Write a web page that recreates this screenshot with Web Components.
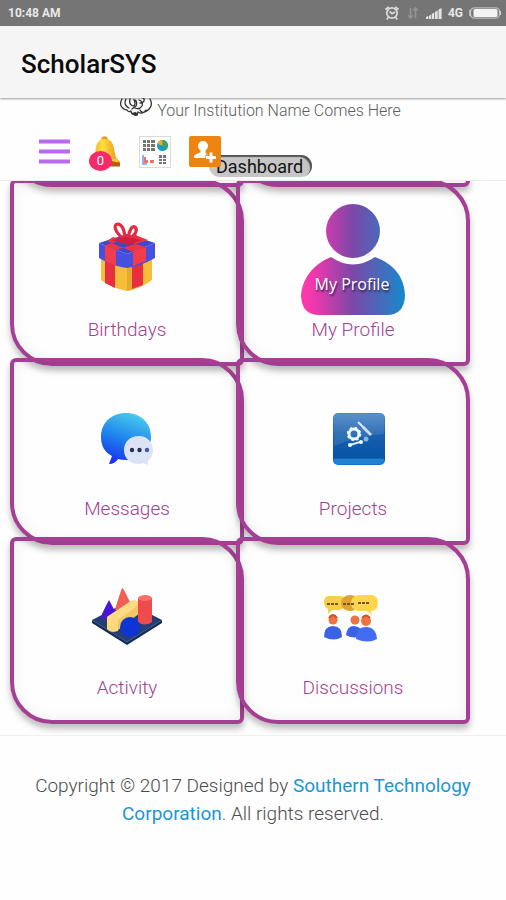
<!DOCTYPE html>
<html lang="en">
<head>
<meta charset="utf-8">
<meta name="viewport" content="width=device-width, initial-scale=1">
<title>ScholarSYS</title>
<style>
html { background: #fefefe; }
body { margin: 0; font-family: Roboto, "Liberation Sans", sans-serif; color: #757575; --brand: #a43f93; --link: #1b96d4; }
</style>
</head>
<body>
<scholar-app></scholar-app>
<script>
function define(name, html) {
  customElements.define(name, class extends HTMLElement {
    constructor() {
      super();
      const t = document.createElement('template');
      t.innerHTML = html;
      this.attachShadow({ mode: 'open' }).append(t.content.cloneNode(true));
    }
  });
}

define('status-bar', `
<style>
:host { display: flex; align-items: center; justify-content: space-between; height: 26px; padding: 0 5px 0 8px; background: #757575; color: #e8e8e8; font-size: 12px; line-height: 16px; font-weight: 700; }
.right { display: flex; align-items: center; gap: 6px; }
svg { display: block; }
</style>
<span>10:48 AM</span>
<div class="right">
  <svg width="16" height="16" viewBox="0 0 16 16" fill="none" stroke="#dedede" stroke-width="1.7"><circle cx="8" cy="8" r="5.2"/><path d="M1.5 4.5 4.8 1.8M14.5 4.5 11.2 1.8M4.2 12.4 2.8 14.5M11.8 12.4 13.2 14.5M5.6 6.4 8 8.800 11 7"/></svg>
  <svg width="14" height="14" viewBox="0 0 14 14" fill="none" stroke="#939393" stroke-width="1.7"><path d="M4.500 2v10M2 9.500l2.500 2.500L7 9.500M9.500 12V2M7.500 4.500 9.500 2 12 4.500"/></svg>
  <svg width="16" height="12" viewBox="0 0 16 12" fill="#e4e4e4"><path d="M0 12v-2l2-1v3zM2.700 12V9l2.300-1.300V12zM5.700 12V7l2.500-1.400V12zM9 12V5l2.700-1.500V12zM12.500 12V2.500L15.600 1v11z"/></svg>
  <span>4G</span>
  <svg width="32" height="12" viewBox="0 0 32 12"><rect x="1.500" y=".8" width="29" height="10.400" rx="4" fill="none" stroke="#bdbdbd" stroke-width="1.300"/><rect x="4.500" y="2" width="24" height="8" rx="1.500" fill="#f3f3f3"/><path d="M1 3v6M31.300 4v4" stroke="#d6d6d6" stroke-width="1.400"/></svg>
</div>`);

define('app-bar', `
<style>
:host { display: flex; align-items: center; height: 72px; padding: 4px 21px 0; box-sizing: border-box; background: #f5f5f5; box-shadow: 0 1px 2px rgba(0,0,0,.4); position: relative; z-index: 3; }
h1 { margin: 0; font-size: 26px; line-height: 30px; font-weight: 500; color: #0b0b0b; }
</style>
<h1><slot></slot></h1>`);

define('institution-line', `
<style>
:host { display: flex; justify-content: center; align-items: center; gap: 4px; height: 26px; padding-left: 14px; overflow: hidden; font-size: 16px; line-height: 20px; font-weight: 300; color: #5c5c5c; }
svg { display: block; align-self: flex-start; }
</style>
<svg width="34" height="22" viewBox="0 0 34 22" fill="none" stroke="#333" stroke-width="1.300" stroke-linecap="round"><path d="M3 1C0 6 2 11 8 12c1 2 3 2 4 1M7 1C5 5 6 8 10 10M11 1c-1 4 0 6 3 7 3-1 2-4 1-6 3 0 3 4 2 6l-4 3M20 2c3 1 4 3 3 6-2 3-5 3-7 2M24 0c2 1 1 4 0 4M31 1c3 5 1 10-5 13-2 1-4 0-5-2M12 13c0 3 3 4 6 4l1-3c3 2 6 1 8-2M21 5l2 0"/><path d="M12 15l5-1 2 3-3 1z" fill="#333" stroke="none"/></svg>
<span><slot></slot></span>`);

define('tool-bar', `
<style>
:host { display: block; height: 57px; border-bottom: 1px solid #ececec; box-sizing: border-box; }
nav { display: flex; gap: 18px; padding: 12px 39px 0; align-items: flex-start; }
button { position: relative; width: 32px; height: 32px; padding: 0; border: 0; background: none; display: block; cursor: pointer; }
svg { display: block; overflow: visible; }
.count { position: absolute; left: 0; top: 15px; width: 23px; height: 20px; border-radius: 50%; background: #f52a68; color: #fff; font-size: 13px; line-height: 20px; font-family: Roboto, sans-serif; text-align: center; }
.add { z-index: 2; }
.page { position: relative; margin: 19px 0 0 -30px; padding: 0 9px 0 7px; height: 22px; font-size: 18px; line-height: 24px; color: #141414; background: #c6c6c6; border-radius: 11px; box-shadow: inset -2px 2px 1px #555; box-sizing: border-box; }
</style>
<nav>
<button aria-label="Menu"><svg width="32" height="32" viewBox="0 0 32 32"><path d="M0 5.500h31M0 15.500h31M0 25.500h31" stroke="#b86af0" stroke-width="4"/></svg></button>
<button aria-label="Notifications"><svg width="32" height="32" viewBox="0 0 32 32"><defs><linearGradient id="g"><stop offset="0" stop-color="#f8a817"/><stop offset=".4" stop-color="#ffdf3c"/><stop offset="1" stop-color="#e98b13"/></linearGradient></defs><path d="M12 4c0-5 7-5 7 0v3h-7z" fill="#e59a22"/><path d="M5 24C8 17 4 4 15 3c12-1 9 14 13 20l3 3v4L2 29v-2z" fill="url(#g)"/><path d="M2 27q14-5 29 0v3.500H2z" fill="#b95a11"/><path d="M4 25q12-4 25 0" stroke="#ffc635" stroke-width="2.500" fill="none"/></svg><span class="count">0</span></button>
<button aria-label="Reports"><svg width="32" height="32" viewBox="0 0 32 32"><rect x=".5" y=".5" width="31" height="31" fill="#fff" stroke="#dadada"/><g fill="#747474"><path d="M4 4h3v3H4zm4 0h3v3H8zm4 0h4v3h-4zM4 8h3v3H4zm4 0h3v3H8zm4 0h4v3h-4zM4 12h3v3H4zm4 0h3v3H8zm4 0h4v3h-4z"/><path d="M20 19h3v3h-3zm4 0h3v3h-3zM20 23h3v2h-3zm4 0h3v2h-3zM20 26h3v2h-3zm4 0h3v2h-3z"/></g><circle cx="23.500" cy="9.500" r="5.500" fill="#189bd1"/><path d="M23.500 9.500V4a5.500 5.500 0 0 1 3 10z" fill="#36a65b"/><path d="M23.500 9.500V4a5.500 5.500 0 0 0-5 4z" fill="#f5a51b"/><path d="M4 19v9h4" fill="none" stroke="#7a8def" stroke-width="1.500"/><path d="M5 27v-6h2v3h2v3zM11 27v-3h4v3z" fill="#f07359"/></svg></button>
<button class="add" aria-label="Add user"><svg width="32" height="32" viewBox="0 0 32 32"><rect width="32" height="31" rx="2" fill="#ed8410"/><circle cx="14" cy="10" r="5" fill="#fff"/><path d="M11.500 13h5v4q2 1 3 2v3H5v-2q1-2 6.500-3.500z" fill="#fff"/><path d="M22 16v11M16.500 21.500h11" stroke="#ed8410" stroke-width="6"/><path d="M22 16.500v10M17 21.500h10" stroke="#fff" stroke-width="3"/></svg></button>
<div class="page"><slot></slot></div>
</nav>`);

define('tile-card', `
<style>
:host { display: block; margin: 0 -8px -8px 0; }
a { display: flex; flex-direction: column; box-sizing: border-box; height: 100%; padding-top: 21px; border: 4px solid var(--brand); border-radius: 6px 42px 6px 42px; box-shadow: 0 5px 6px rgba(0,0,0,.25), inset 0 0 14px rgba(0,0,0,.07); color: var(--brand); text-decoration: none; text-align: center; font-size: 19px; line-height: 30px; font-weight: 300; }
:host([edge]) a { padding: 0; }
.pic { display: flex; height: 111px; align-items: center; justify-content: center; }
:host([edge]) .pic { display: none; }
</style>
<a href="#"><span class="pic"><slot name="icon"></slot></span><span><slot></slot></span></a>`);

define('page-footer', `
<style>
:host { display: block; border-top: 1px solid #f0f0f0; padding: 36px 30px; text-align: center; font-size: 19px; line-height: 28px; font-weight: 300; color: #4c4c4c; }
p { margin: 0; }
a { color: var(--link); text-decoration: none; font-weight: 400; }
</style>
<p>Copyright © 2017 Designed by <a href="#">Southern Technology Corporation</a>. All rights reserved.</p>`);

define('scholar-app', `
<style>
:host { display: block; }
main { overflow: hidden; padding-bottom: 11px; }
.grid { display: grid; grid-template-columns: 1fr 1fr; grid-template-rows: 52px; grid-auto-rows: 179px; margin-top: -54px; padding: 0 44px 8px 10px; }
svg { display: block; overflow: visible; }
</style>
<status-bar></status-bar>
<app-bar>ScholarSYS</app-bar>
<institution-line>Your Institution Name Comes Here</institution-line>
<tool-bar>Dashboard</tool-bar>
<main><div class="grid">
<tile-card edge aria-hidden="true"></tile-card><tile-card edge aria-hidden="true"></tile-card>

<tile-card>Birthdays
<svg slot="icon" width="58" height="72" viewBox="0 2 58 72"><path d="M3 30l26 10 25-10v28q-12 9-25 11Q14 66 3 58z" fill="#f6bd3b"/><path d="M7 32l10 4v30l-10-5zM34 39l11-4v28l-11 4z" fill="#e82f42"/><path d="M29 40l5-2v29l-5 2z" fill="#e6a92e"/><path d="M1 21l28-9 28 9-28 11z" fill="#3d49cb"/><path d="M1 21l28 11 28-11v15q-14 8-28 10Q14 44 1 36z" fill="#474fe0"/><path d="M7 23l11 5v16L7 39zM35 30l13-5v14l-13 5z" fill="#f33c4b"/><path d="M7 23L40 14l10 4-32 10zM48 25L15 15l-6 4 26 11z" fill="#ef3445"/><path d="M27 18C16 10 15 2 20 2c6 1 6 9 8 16M29 18c3-9 4-15 8-13 2 2 3 7-8 13l10-4" fill="none" stroke="#e52b40" stroke-width="3.200"/><path d="M13 18l15-3 16 3-13 5z" fill="#d51e39"/></svg></tile-card>

<tile-card>My Profile
<svg slot="icon" width="105" height="111" viewBox="0 0 105 111"><defs><linearGradient id="p" gradientUnits="userSpaceOnUse" x1="0" y1="0" x2="105" y2="0"><stop offset="0" stop-color="#ff39ab"/><stop offset=".12" stop-color="#f038ad"/><stop offset=".5" stop-color="#7948a8"/><stop offset=".72" stop-color="#5065b8"/><stop offset="1" stop-color="#128bcd"/></linearGradient></defs><circle cx="52" cy="27" r="27" fill="url(#p)"/><path d="M30 53Q52 68 74 53C94 60 104 75 104 92Q103 111 86 111H18Q1 111 0 92C1 75 12 60 30 53Z" fill="url(#p)"/><text x="51" y="86" text-anchor="middle" font-family="Open Sans, sans-serif" font-size="16" font-weight="400" fill="#fff" style="text-shadow:1px 2px 2px #312053">My Profile</text></svg></tile-card>

<tile-card>Messages
<svg slot="icon" width="52" height="52" viewBox="0 0 52 52"><defs><linearGradient id="m" x1=".65" y1="0" x2=".3" y2="1"><stop offset="0" stop-color="#4bcbed"/><stop offset=".5" stop-color="#2085ed"/><stop offset="1" stop-color="#1630ed"/></linearGradient></defs><path d="M25 0C40 0 50 10 50 24S39 47 25 47q-4 0-8-1-3 5-9 5l3-8C3 39 0 32 0 24 0 10 10 0 25 0z" fill="url(#m)"/><path d="M38 23c8 0 14 6 14 14q0 7-5 11v4l-5-2q-2 1-5 1c-8 0-14-6-14-14s6-14 15-14z" fill="#dce3f5"/><circle cx="31" cy="37" r="2.200" fill="#293052"/><circle cx="38.500" cy="37" r="2.200" fill="#293052"/><circle cx="46" cy="37" r="2.200" fill="#4958a3"/></svg></tile-card>

<tile-card>Projects
<svg slot="icon" width="64" height="52" viewBox="-12 0 64 52"><defs><linearGradient id="j" x2="0" y2="1"><stop offset="0" stop-color="#4b87c6"/><stop offset=".4" stop-color="#1b61ad"/><stop offset=".82" stop-color="#0754a5"/><stop offset="1" stop-color="#1673ca"/></linearGradient></defs><rect width="52" height="52" rx="5" fill="url(#j)"/><path d="M1 3Q1 1 5 1h42q4 0 4 4v16Q28 22 1 33z" fill="#fff" opacity=".1"/><path d="M1 45h50v2q0 4-4 4H5q-4 0-4-4z" fill="#2281d3"/><path d="M0 45h52" stroke="#094d94"/><circle cx="21" cy="21" r="5" fill="none" stroke="#eef8ff" stroke-width="3"/><circle cx="21" cy="21" r="6.500" fill="none" stroke="#eef8ff" stroke-width="1.500" stroke-dasharray="2.500 2.600"/><path d="M25 9l8 8M17 32l10-3" stroke="#dceaff" stroke-width="2"/><path d="M30 14l8 8" stroke="#c5dbf0" stroke-width="3"/><circle cx="33" cy="26" r="2.500" fill="#80b9e8"/><circle cx="17" cy="32" r="2" fill="#fff"/><circle cx="28" cy="29" r="2" fill="#fff"/></svg></tile-card>

<tile-card>Activity
<svg slot="icon" width="70" height="58" viewBox="0 1 70 58"><path d="M0 32L35 14l35 18-35 22z" fill="#233f75"/><path d="M0 32l35 22 35-22v3L35 57 0 35z" fill="#142c5c"/><path d="M30 0q1 0 2 2l9 18q-7 6-18 2 1-5 7-22z" fill="#f06054"/><path d="M17 12l8 15q-3 6-16 3-1-1 8-18z" fill="#4a16d5"/><path d="M15 29L39 13q6-2 9 3v9L26 42q-7 4-11-1z" fill="#f3c667"/><path d="M15 29L39 13q6-2 9 3L26 32q-5 2-11-3z" fill="#ffdc83"/><path d="M15 29q5 4 11 3v11q-7 2-11-2z" fill="#ffd97c"/><path d="M46 10h14v24q-7 5-14 0z" fill="#ee4b4d"/><ellipse cx="53" cy="10" rx="7" ry="3" fill="#ff7164"/><circle cx="38" cy="39" r="10" fill="#0d35d4"/></svg></tile-card>

<tile-card>Discussions
<svg slot="icon" width="54" height="48" viewBox="2 0 54 48"><path d="M4 2h13q5 1 4 8-1 6-7 6H8l-4 4v-5Q0 13 0 8q0-5 4-6z" fill="#f7ce49"/><ellipse cx="26" cy="9" rx="9" ry="8" fill="#dfa42d"/><path d="M34 1h14q6 1 6 8t-6 8h-1l1 4-5-4h-9q-7-2-7-8t7-8z" fill="#ffd64b"/><g stroke="#795421" stroke-width="2.200"><path d="M3 10h11M19 10h11M34 9h12" stroke-dasharray="3 1"/></g><g fill="#3b62e6"><path d="M0 43q0-11 9-11t9 11q-8 5-18 0zM22 41q1-9 8-9 9 1 9 9-9 5-17 0z"/><path d="M32 45q0-12 10-12t11 12q-9 5-21 0z" fill="#426df2"/></g><g fill="#ee7342"><circle cx="9" cy="26" r="4.500"/><circle cx="31" cy="26" r="4.500"/><circle cx="42" cy="27" r="5"/></g><path d="M5 24q4-6 8 0M38 24q4-5 8 0" stroke="#cc522b" stroke-width="2" fill="none"/></svg></tile-card>
</div></main>
<page-footer></page-footer>`);
</script>
</body>
</html>
